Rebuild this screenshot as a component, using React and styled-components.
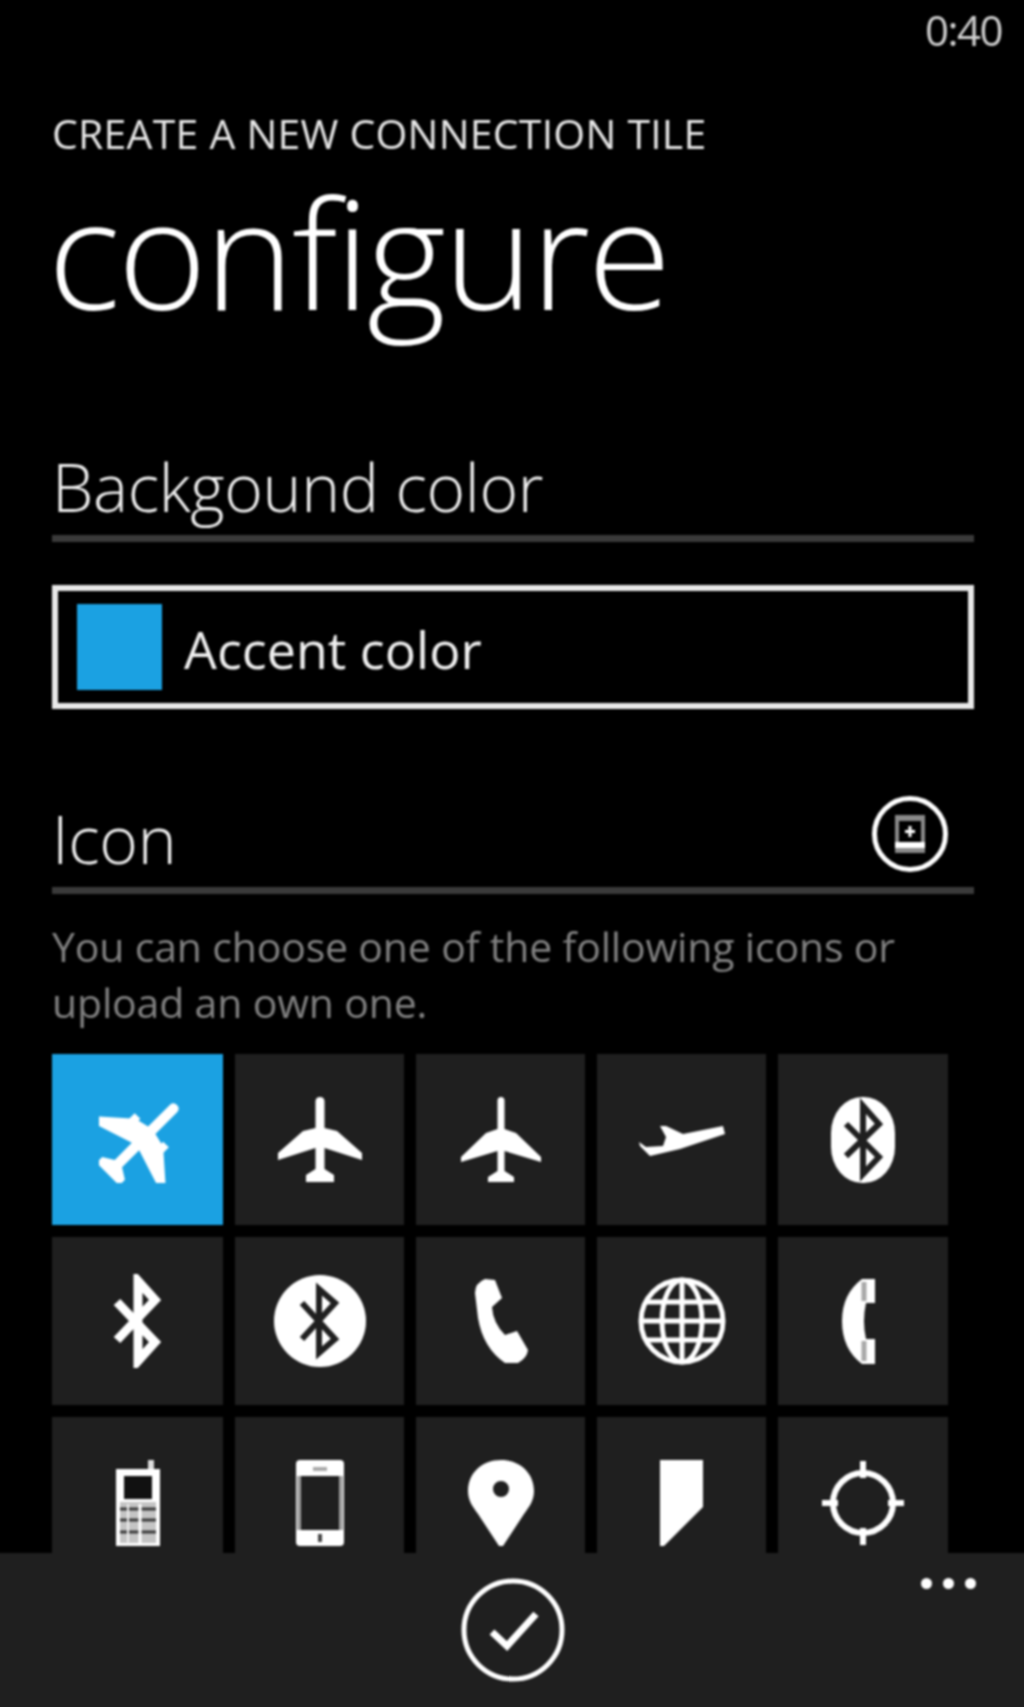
import React from "react";
import styled, { createGlobalStyle } from "styled-components";

const Global = createGlobalStyle`
  html, body { margin: 0; padding: 0; background: #000; }
  #root { width: 1024px; height: 1707px; overflow: hidden; }
`;

const Screen = styled.div`
  width: 1032px; height: 1715px; margin: -4px; display: flex; flex-direction: column;
  background: #000; color: #fff; font-family: "Open Sans", "Noto Sans", sans-serif;
  overflow: hidden; filter: blur(1px);
`;
const Main = styled.main`
  flex: 1; min-height: 0; overflow: hidden; padding: 4px 54px 0 56px;
`;
const StatusBar = styled.div`
  display: flex; justify-content: flex-end; height: 64px; padding-right: 22px; margin: 0 -50px 0 0;
`;
const Clock = styled.span`
  font-size: 42px; line-height: 60px; font-weight: 400; color: #d0d0d0; letter-spacing: -1.5px;
`;
const AppTitle = styled.div`
  margin-top: 44px; font-size: 41px; line-height: 50px; font-weight: 400; color: #e6e6e6; letter-spacing: 0.22px; white-space: nowrap;
`;
const PageTitle = styled.h1`
  margin: 9px 0 0 -4px; font-size: 152px; line-height: 170px; font-weight: 300; letter-spacing: -2.4px; white-space: nowrap;
`;
const SectionHead = styled.div`
  display: flex; align-items: flex-end; justify-content: space-between; height: ${p => p.$h}px;
  margin-top: ${p => p.$top}px; border-bottom: 7px solid #3a3a3a; padding-right: 25px;
`;
const SectionLabel = styled.span`
  font-size: 66px; line-height: 90px; font-weight: 300; color: #f0f0f0; letter-spacing: -0.35px; padding-bottom: 4px;
`;
const Picker = styled.div`
  margin-top: 43px; height: 124px; box-sizing: border-box; border: 6px solid #e8e8e8;
  display: flex; align-items: center; gap: 22px; padding-left: 19px;
`;
const Swatch = styled.div`
  width: 85px; height: 86px; background: #1ba1e2;
`;
const PickerLabel = styled.span`
  font-size: 52px; line-height: 60px; color: #f0f0f0; padding-top: 4px;
`;
const RoundButton = styled.div`
  width: 78px; height: 78px; margin-bottom: 13px; flex: none;
  svg { display: block; }
`;
const Hint = styled.p`
  margin: 24px 0 0; width: 920px; font-size: 41px; line-height: 56px; color: #808080; letter-spacing: -0.17px;
`;
const IconGrid = styled.div`
  margin: 24px 0 0; display: grid; grid-template-columns: 171px 169px 169px 169px 170px;
  grid-template-rows: 171px 168px 171px; gap: 12px;
`;
const Tile = styled.div`
  background: ${p => (p.$active ? "#1ba1e2" : "#1f1f1f")};
  display: flex; align-items: center; justify-content: center;
`;
const Glyph = styled.svg`
  display: block; flex: none; margin-left: ${p => p.$dx || 0}px;
`;
const AppBar = styled.footer`
  flex: none; height: 158px; background: #1f1f1f; display: grid; grid-template-columns: 1fr auto 1fr; padding-top: 25px; box-sizing: border-box;
`;
const BarSide = styled.div`
  display: flex; justify-content: flex-end; padding: 0 52px 0 0; gap: 11px;
`;
const Dot = styled.span`
  width: 11px; height: 11px; border-radius: 50%; background: #fff;
`;
const BarCenter = styled.div`
  padding-left: 2px;
  svg { display: block; }
`;

const planePath = "M38.5 4 Q39 0 43 0 Q47 0 47.5 4 L47.5 31 L60 34 L85 56 L85 63 L47.5 51 L47.5 72 L57 78 L57 85 L29 85 L29 78 L38.5 72 L38.5 51 L1 63 L1 56 L26 34 L38.5 31 Z";
const planeThin = "M39.5 3 Q40 0 43 0 Q46 0 46.5 3 L46.5 32 L58 36 L83 60 L83 65 L46.5 54 L46.5 74 L56 80 L56 85 L30 85 L30 80 L39.5 74 L39.5 54 L3 65 L3 60 L28 36 L39.5 32 Z";

const Svg = ({ w, h, dx, children }) => (
  <Glyph $dx={dx} width={w} height={h} viewBox={`0 0 ${w} ${h}`}>{children}</Glyph>
);

const BtSymbol = ({ d, color, width }) => (
  <path d={d} fill="none" stroke={color} strokeWidth={width} strokeLinejoin="miter" />
);

const icons = [
  <Svg w={86} h={86} dx={8}>
    <g transform="translate(43 43) rotate(45) scale(1.15) translate(-43 -43)">
      <path d={planePath} fill="#fff" />
      <rect x="22" y="31" width="7" height="9" fill="#fff" />
      <rect x="57" y="31" width="7" height="9" fill="#fff" />
    </g>
  </Svg>,
  <Svg w={86} h={86}><path d={planePath} fill="#fff" /></Svg>,
  <Svg w={86} h={86}><path d={planeThin} fill="#fff" /></Svg>,
  <Svg w={86} h={32}><path d="M0 18 L7 23 L24 22 L27 13 L21 2 L27 2 L44 10 L84 2 L86 10 L41 25 L11 32 L1 22 Z" fill="#fff" /></Svg>,
  <Svg w={64} h={86}>
    <rect x="0" y="0" width="64" height="86" rx="31" ry="36" fill="#fff" />
    <BtSymbol d="M15 59 L48 27 L32 9 V77 L48 60 L15 27" color="#1f1f1f" width={6} />
  </Svg>,
  <Svg w={50} h={94}>
    <BtSymbol d="M4 28 L42 68 L25 87 V7 L42 26 L4 66" color="#fff" width={9} />
  </Svg>,
  <Svg w={92} h={94}>
    <circle cx="46" cy="47" r="46" fill="#fff" />
    <BtSymbol d="M28 65 L61 29 L45 15 V79 L61 65 L28 29" color="#1f1f1f" width={6} />
  </Svg>,
  <Svg w={56} h={86}>
    <path d="M2 15 Q2 5 12 1 L22 2 L29 20 L19 29 Q20 45 32 57 L44 53 L55 72 Q54 80 45 85 L32 85 Q10 70 5 40 Z" fill="#fff" />
  </Svg>,
  <Svg w={88} h={90}>
    <g fill="none" stroke="#fff" strokeWidth="5">
      <circle cx="44" cy="45" r="41" />
      <ellipse cx="44" cy="45" rx="20" ry="41" />
      <path d="M44 4 V86 M4 45 H84 M9 26 H79 M9 64 H79" />
    </g>
  </Svg>,
  <Svg w={33} h={85} dx={-10}>
    <path d="M33 0 L33 24 L24 24 Q20 42 24 60 L33 60 L33 85 L20 85 Q0 70 0 42 Q0 15 20 0 Z" fill="#fff" />
    <path d="M22 3 V22 M22 62 V82" stroke="#a8a8a8" strokeWidth="5" />
  </Svg>,
  <Svg w={44} h={86}>
    <rect x="32" y="0" width="6" height="12" fill="#ddd" />
    <rect x="0" y="9" width="44" height="77" fill="#fff" />
    <rect x="8" y="16" width="28" height="23" fill="#111" />
    <rect x="4" y="42" width="36" height="41" fill="#c4c4c4" />
    <path d="M4 49 H40 M4 60 H40 M4 72 H40" stroke="#3a3a3a" strokeWidth="3" />
    <path d="M24 44 V84" stroke="#fff" strokeWidth="3" />
    <path d="M12 44 V84" stroke="#eee" strokeWidth="2" />
  </Svg>,
  <Svg w={48} h={86}>
    <rect x="0" y="0" width="48" height="86" rx="4" fill="#fff" />
    <rect x="5" y="16" width="38" height="54" fill="#1f1f1f" />
    <rect x="1" y="16" width="4" height="54" fill="#a0a0a0" />
    <rect x="43" y="16" width="4" height="54" fill="#a0a0a0" />
    <rect x="17" y="7" width="14" height="4" fill="#aaa" />
    <rect x="22" y="74" width="4" height="8" fill="#444" />
  </Svg>,
  <Svg w={66} h={86}>
    <path fillRule="evenodd" d="M33 0 C52 0 66 13 66 31 C66 41 61 47 56 54 L35 86 L31 86 L10 54 C5 47 0 41 0 31 C0 13 14 0 33 0 Z M33 21 A8 8 0 1 0 33 37 A8 8 0 1 0 33 21 Z" fill="#fff" />
  </Svg>,
  <Svg w={43} h={86}><path d="M0 0 H43 V47 L4 86 H0 Z" fill="#fff" /></Svg>,
  <Svg w={82} h={86}>
    <g fill="none" stroke="#fff" strokeWidth="6">
      <circle cx="41" cy="43" r="30" />
      <path d="M41 1 V18 M41 68 V85 M0 43 H16 M66 43 H82" />
    </g>
  </Svg>,
];

export default function App() {
  return (
    <Screen>
      <Global />
      <Main>
        <StatusBar><Clock>0:40</Clock></StatusBar>
        <AppTitle>CREATE A NEW CONNECTION TILE</AppTitle>
        <PageTitle>configure</PageTitle>
        <SectionHead $h={98} $top={100}><SectionLabel>Backgound color</SectionLabel></SectionHead>
        <Picker><Swatch /><PickerLabel>Accent color</PickerLabel></Picker>
        <SectionHead $h={103} $top={75}>
          <SectionLabel>Icon</SectionLabel>
          <RoundButton>
            <svg width="78" height="78" viewBox="0 0 78 78">
              <circle cx="39" cy="38" r="35.5" fill="none" stroke="#fff" strokeWidth="5" />
              <rect x="24" y="19" width="30" height="38" fill="#8a8a8a" />
              <rect x="28" y="25" width="22" height="21" fill="#000" />
              <rect x="24" y="46" width="30" height="6" fill="#fff" />
              <path d="M39 30 V41 M34 35.5 H44" stroke="#fff" strokeWidth="3" />
            </svg>
          </RoundButton>
        </SectionHead>
        <Hint>You can choose one of the following icons or upload an own one.</Hint>
        <IconGrid>
          {icons.map((icon, i) => (
            <Tile key={i} $active={i === 0}>{icon}</Tile>
          ))}
        </IconGrid>
      </Main>
      <AppBar>
        <div />
        <BarCenter>
          <svg width="104" height="104" viewBox="0 0 104 104">
            <circle cx="52" cy="52" r="49" fill="none" stroke="#fff" strokeWidth="5" />
            <path d="M31 54 L46 68 L75 36" fill="none" stroke="#fff" strokeWidth="7" />
          </svg>
        </BarCenter>
        <BarSide><Dot /><Dot /><Dot /></BarSide>
      </AppBar>
    </Screen>
  );
}
